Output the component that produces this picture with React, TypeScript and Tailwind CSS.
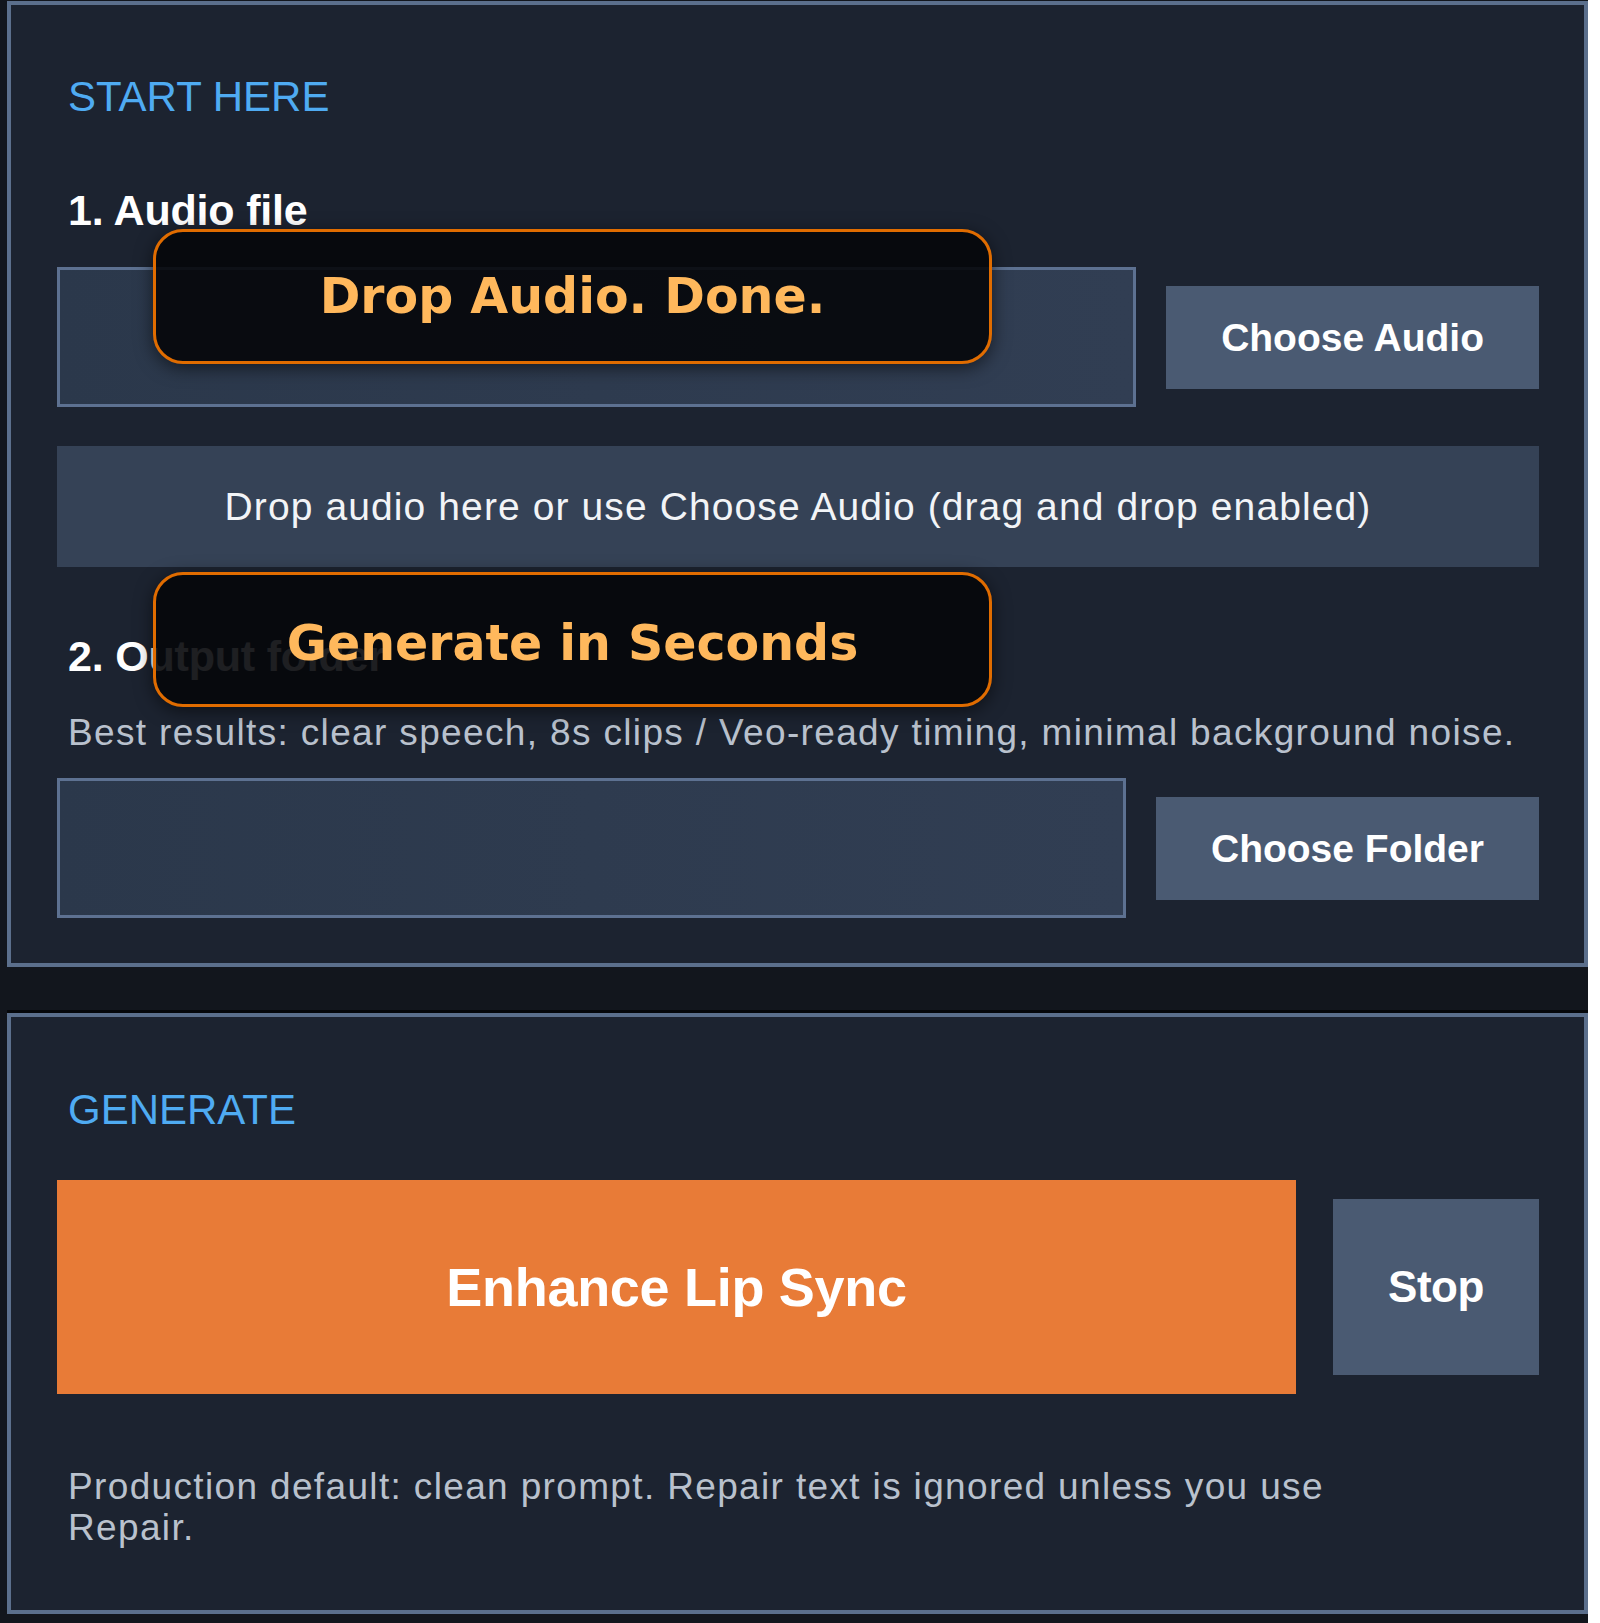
import React from 'react';

const sans = { fontFamily: '"Liberation Sans", Arial, Helvetica, sans-serif' };

// Bulle orange posée par-dessus le formulaire
const Callout: React.FC<{ text: string; top: string; shift?: string }> = ({ text, top, shift = '' }) => (
  <div
    className={`absolute left-[142px] ${top} w-[839px] h-[135px] rounded-[30px] border-[3px] border-[#e06c00] bg-[#05070a]/90 shadow-[0_4px_18px_rgba(0,0,0,0.55)] flex items-center justify-center`}
  >
    <span className={`${shift} font-['DejaVu_Sans',Verdana,sans-serif] font-bold text-[49px] leading-none text-[#ffb85c]`}>
      {text}
    </span>
  </div>
);

const FieldRow: React.FC<{ label: string; mt: string }> = ({ label, mt }) => (
  <div className={`${mt} flex items-center gap-[30px] h-[140px]`}>
    <div className="flex-1 h-[140px] border-[3px] border-[#5d7191] bg-gradient-to-r from-[#2b384b] to-[#313e53]" />
    <button className="h-[103px] px-[55px] bg-[#4a5a72] text-white font-bold text-[39px] leading-none whitespace-nowrap">
      {label}
    </button>
  </div>
);

export default function App() {
  return (
    <div className="bg-white w-[1600px] min-h-[1623px]" style={sans}>
      <div className="w-[1588px] min-h-[1623px] bg-[#12161d] pl-[7px] pt-[1px]">
        {/* START HERE */}
        <section className="relative border-4 border-[#5b6f8c] bg-[#1c2330] pl-[46px] pr-[45px] pt-[68px] pb-[45px]">
          <h2 className="ml-[11px] text-[42px] leading-[48px] text-[#4fabf2]">START HERE</h2>
          <h3 className="mt-[65px] ml-[11px] text-[43px] leading-[48px] font-bold text-white tracking-[-0.2px]">
            1. Audio file
          </h3>
          <FieldRow label="Choose Audio" mt="mt-[33px]" />
          <div className="mt-[39px] h-[121px] bg-[#354256] flex items-center justify-center">
            <span className="text-[39px] leading-none text-[#f2f4f7] tracking-[1.1px]">
              Drop audio here or use Choose Audio (drag and drop enabled)
            </span>
          </div>
          <h3 className="mt-[65px] ml-[11px] text-[43px] leading-[48px] font-bold text-white tracking-[-0.2px]">
            2. Output folder
          </h3>
          <p className="mt-[32px] ml-[11px] text-[37px] leading-[42px] text-[#b9c1cd] tracking-[1.35px] whitespace-nowrap">
            Best results: clear speech, 8s clips / Veo-ready timing, minimal background noise.
          </p>
          <FieldRow label="Choose Folder" mt="mt-[24px]" />

          <Callout text="Drop Audio. Done." top="top-[224px]" />
          <Callout text="Generate in Seconds" top="top-[567px]" shift="translate-y-[4px]" />
        </section>

        {/* GENERATE */}
        <section className="mt-[46px] border-4 border-[#5b6f8c] bg-[#1c2330] pl-[46px] pr-[45px] pt-[69px] pb-[62px] shadow-[0_-3px_0_#05070a]">
          <h2 className="ml-[11px] text-[42px] leading-[48px] text-[#4fabf2]">GENERATE</h2>
          <div className="mt-[46px] flex items-center gap-[37px]">
            <button className="flex-1 h-[214px] bg-[#e87b37] text-white font-bold text-[54px] leading-none tracking-[-0.3px]">
              Enhance Lip Sync
            </button>
            <button className="w-[206px] h-[176px] bg-[#4a5a72] text-white font-bold text-[44px] leading-none tracking-[-0.5px]">
              Stop
            </button>
          </div>
          <p className="mt-[72px] ml-[11px] max-w-[1340px] text-[37px] leading-[41px] text-[#b9c1cd] tracking-[1.35px]">
            Production default: clean prompt. Repair text is ignored unless you use Repair.
          </p>
        </section>
      </div>
    </div>
  );
}
